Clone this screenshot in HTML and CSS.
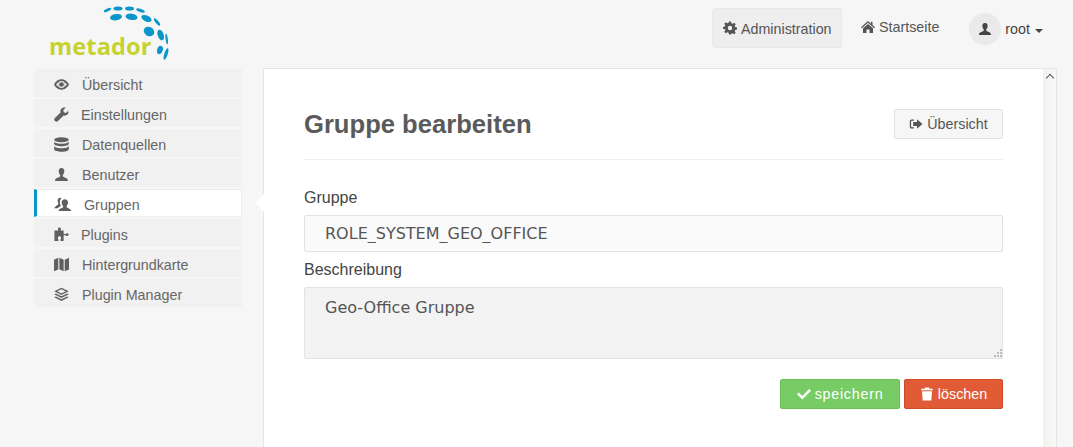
FILE: index.html
```html
<!DOCTYPE html>
<html lang="de">
<head>
<meta charset="utf-8">
<title>Gruppe bearbeiten</title>
<link rel="stylesheet" href="styles.css">
</head>
<body>
<svg class="defs" width="0" height="0" aria-hidden="true">
  <symbol id="i-user" viewBox="0 0 14 14"><path d="M7 1C5.200 1 4.300 2.300 4.400 4c.1 1.500.6 2.800 1.300 3.500.2.400.2.900 0 1.300C4.700 9.800 1.200 10 1 12.500V13h12v-.5c-.2-2.500-3.700-2.700-4.700-3.700-.2-.4-.2-.9 0-1.300.7-.7 1.200-2 1.300-3.500C9.700 2.300 8.800 1 7 1z"/></symbol>
  <symbol id="i-eye" viewBox="0 0 14 14"><path fill-rule="evenodd" d="M7 2.200C3.700 2.200 1.200 4.600 0 7c1.200 2.400 3.700 4.800 7 4.800S12.800 9.400 14 7c-1.200-2.400-3.700-4.800-7-4.800zM7 3.800a3.200 3.200 0 1 1 0 6.400 3.200 3.200 0 0 1 0-6.400zM2 7c.5-.9 1.200-1.700 2-2.200-.6 1.300-.6 3.100 0 4.400C3.200 8.700 2.500 7.900 2 7zm10 0c-.5.900-1.200 1.700-2 2.200.6-1.300.6-3.100 0-4.400.8.500 1.500 1.300 2 2.200z"/><circle cx="7" cy="7" r="2.200"/></symbol>
  <symbol id="i-wrench" viewBox="0 0 14 14"><path d="M13.600 3.300 11.200 5.600 9.200 5 8.600 3l2.300-2.400c-1.500-.5-3.100-.1-4 1-.9.900-1.200 2.300-.8 3.500L.7 10.500c-.6.600-.6 1.600 0 2.300l.5.5c.6.600 1.600.6 2.300 0l5.400-5.400c1.200.4 2.600.1 3.600-.8 1.100-1 1.500-2.700.1-3.800z"/></symbol>
  <symbol id="i-db" viewBox="0 0 14 14"><ellipse cx="7" cy="2.600" rx="6.800" ry="2.400"/><path d="M.2 3.900v2.300c0 1.300 3 2.400 6.800 2.400s6.800-1.100 6.800-2.400V3.900C13.800 5.200 10.800 6.300 7 6.300S.2 5.200.2 3.900z"/><path d="M.2 8.100v3.300c0 1.300 3 2.400 6.800 2.400s6.800-1.100 6.800-2.400V8.100c0 1.300-3 2.400-6.800 2.400S.2 9.400.2 8.100z"/></symbol>
  <symbol id="i-group" viewBox="0 0 16 14"><path d="M6 .6C4.400.6 3.400 1.700 3.400 3.400c0 1.100.3 2 .8 2.700-.1 1.500-2 1.900-3 3L0 10.500h3.800c.8-1.100 2.100-1.600 3-2-.9-1-1.300-2.300-1.300-3.800 0-1.400.5-2.600 1.500-3.400C6.800 .9 6.500.6 6 .6z"/><path d="M10.200 2c-2 0-3.100 1.400-3 3.200.1 1.400.6 2.500 1.300 3.200.2.400.2.800 0 1.200-1 1-3.900 1.100-4.300 3.600h12c-.4-2.500-3.300-2.600-4.300-3.600-.2-.4-.2-.8 0-1.200.7-.7 1.200-1.800 1.300-3.200.1-1.800-1-3.200-3-3.200z"/></symbol>
  <symbol id="i-puzzle" viewBox="0 0 14 14"><path d="M3.700 1.800C3.700.9 4.400.4 5.100.4s1.400.5 1.400 1.400c0 .6-.4.900-.4 1.500H9v3.300h2c.3-.5.7-.8 1.300-.8.800 0 1.400.6 1.400 1.300s-.6 1.300-1.400 1.300c-.6 0-1-.3-1.300-.8H9V13H6.100v-1.600c.3-.3.500-.7.500-1.200 0-.9-.7-1.500-1.500-1.500s-1.500.6-1.500 1.500c0 .5.200.9.500 1.200V13H.4V3.300h3.700c0-.6-.4-.9-.4-1.500z"/></symbol>
  <symbol id="i-map" viewBox="0 0 14 14"><path d="M0 2.500 4 .6v11L0 13.400zM5 .6l4 2v10.800l-4-1.900zM10 2.600 14 .6v11l-4 1.800z"/></symbol>
  <symbol id="i-layers" viewBox="0 0 14 14"><path fill-rule="evenodd" d="M7 .6 13.800 4 7 7.400.2 4zM7 2 3 4l4 2 4-2z"/><path d="M1.800 6 .2 6.800 7 10.200l6.800-3.400L12.200 6 7 8.600z"/><path d="M1.800 8.800.2 9.600 7 13l6.800-3.400-1.600-.8L7 11.400z"/></symbol>
  <symbol id="i-gear" viewBox="0 0 14 14"><path fill-rule="evenodd" d="M6 .5h2l.4 1.800 1.300.5 1.600-1 1.400 1.400-1 1.600.5 1.300 1.800.4v2l-1.800.4-.5 1.300 1 1.600-1.400 1.400-1.600-1-1.300.5L8 13.500H6l-.4-1.800-1.300-.5-1.600 1-1.400-1.400 1-1.600-.5-1.300L0 8V6l1.800-.4.500-1.300-1-1.600 1.400-1.400 1.600 1 1.300-.5zM7 4.800a2.200 2.200 0 1 0 0 4.400 2.200 2.200 0 0 0 0-4.400z"/></symbol>
  <symbol id="i-home" viewBox="0 0 14 14"><path d="M7 1 0 7.200l.8 1L7 2.800l6.200 5.400.8-1L11.500 5V1.800H10v2z"/><path d="M7 4 2 8.300V13h3.500V9.500h3V13H12V8.300z"/></symbol>
  <symbol id="i-logout" viewBox="0 0 14 14"><path d="M5 2.500H2.500C1.400 2.500.8 3.200.8 4.300v5.400c0 1.100.6 1.800 1.700 1.800H5v-1.300H2.800c-.5 0-.7-.2-.7-.7V4.500c0-.5.200-.7.700-.7H5z"/><path d="M8 2.200 13.500 7 8 11.800V9H4.200V5H8z"/></symbol>
  <symbol id="i-check" viewBox="0 0 14 14"><path d="M1.800 5.500 5.300 9l6.900-7L14 3.800 5.300 12.500 0 7.300z"/></symbol>
  <symbol id="i-trash" viewBox="0 0 14 14"><path d="M5 .5h4l.5 1.200h3.300v1.600H1.200V1.700h3.300zM2 4.200h10l-.7 9.300H2.700z"/></symbol>
</svg>

<header class="topbar">
  <a class="logo" href="#">
    <svg class="logo-mark" viewBox="0 0 135 65" width="135" height="65" aria-hidden="true">
      <g fill="#0a96c8">
        <ellipse cx="67.500" cy="10" rx="4" ry="1.500" transform="rotate(-25 67.500 10)"/>
        <ellipse cx="78" cy="8.600" rx="4.500" ry="2"/>
        <ellipse cx="89.500" cy="8.600" rx="4.500" ry="2"/>
        <ellipse cx="100.500" cy="10.500" rx="4.500" ry="1.600" transform="rotate(20 100.500 10.500)"/>
        <ellipse cx="76" cy="17.200" rx="6" ry="3.200" transform="rotate(-8 76 17.200)"/>
        <ellipse cx="91.500" cy="16.800" rx="6" ry="3.200" transform="rotate(8 91.500 16.800)"/>
        <ellipse cx="106.500" cy="18.500" rx="5.500" ry="3" transform="rotate(25 106.500 18.500)"/>
        <ellipse cx="117" cy="22" rx="4.500" ry="1.500" transform="rotate(50 117 22)"/>
        <ellipse cx="109" cy="31.500" rx="5.500" ry="4.500" transform="rotate(30 109 31.500)"/>
        <ellipse cx="120.700" cy="35" rx="3" ry="5.500" transform="rotate(-20 120.700 35)"/>
        <ellipse cx="126.700" cy="39" rx="1.100" ry="5.200" transform="rotate(-8 126.700 39)"/>
        <ellipse cx="120" cy="50" rx="2.800" ry="4.200" transform="rotate(18 120 50)"/>
        <ellipse cx="126" cy="54" rx="1.700" ry="6" transform="rotate(18 126 54)"/>
      </g>
    </svg>
    <span class="logo-text">metador</span>
  </a>
  <nav class="topnav">
    <a class="topnav-admin" href="#"><svg class="ico"><use href="#i-gear"/></svg><span class="nudge">Administration</span></a>
    <a class="topnav-home" href="#"><svg class="ico"><use href="#i-home"/></svg>Startseite</a>
    <a class="topnav-user" href="#">
      <span class="avatar"><svg class="ico"><use href="#i-user"/></svg></span>
      root<span class="caret"></span>
    </a>
  </nav>
</header>

<div class="layout">
  <ul class="sidebar">
    <li class="side-item"><svg class="ico"><use href="#i-eye"/></svg><span class="lbl">Übersicht</span></li>
    <li class="side-item tight"><svg class="ico"><use href="#i-wrench"/></svg><span class="lbl">Einstellungen</span></li>
    <li class="side-item"><svg class="ico"><use href="#i-db"/></svg><span class="lbl">Datenquellen</span></li>
    <li class="side-item"><svg class="ico"><use href="#i-user"/></svg><span class="lbl">Benutzer</span></li>
    <li class="side-item active"><svg class="ico"><use href="#i-group"/></svg><span class="lbl">Gruppen</span></li>
    <li class="side-item tight"><svg class="ico"><use href="#i-puzzle"/></svg><span class="lbl">Plugins</span></li>
    <li class="side-item"><svg class="ico"><use href="#i-map"/></svg><span class="lbl">Hintergrundkarte</span></li>
    <li class="side-item"><svg class="ico"><use href="#i-layers"/></svg><span class="lbl">Plugin Manager</span></li>
  </ul>

  <main class="panel">
    <span class="notch"></span>
    <div class="panel-body">
      <div class="page-head">
        <h1 class="title">Gruppe bearbeiten</h1>
        <a class="btn btn-default" href="#"><svg class="ico"><use href="#i-logout"/></svg>Übersicht</a>
      </div>
      <form class="form">
        <label class="field-label first" for="g">Gruppe</label>
        <input class="field field-input" id="g" type="text" value="ROLE_SYSTEM_GEO_OFFICE">
        <label class="field-label" for="b">Beschreibung</label>
        <div class="area-wrap">
          <textarea class="field field-area" id="b">Geo-Office Gruppe</textarea>
          <svg class="grip" width="9" height="9" viewBox="0 0 9 9" aria-hidden="true">
            <g fill="#bdbdbd">
              <rect x="7" y="0" width="2" height="2"/>
              <rect x="4" y="3" width="2" height="2"/><rect x="7" y="3" width="2" height="2"/>
              <rect x="1" y="6" width="2" height="2"/><rect x="4" y="6" width="2" height="2"/><rect x="7" y="6" width="2" height="2"/>
            </g>
          </svg>
        </div>
        <div class="actions">
          <button class="btn btn-save" type="button"><svg class="ico"><use href="#i-check"/></svg>speichern</button>
          <button class="btn btn-delete" type="button"><svg class="ico"><use href="#i-trash"/></svg>löschen</button>
        </div>
      </form>
    </div>
    <div class="scrolltrack"><span class="scroll-up"></span></div>
  </main>
</div>
</body>
</html>
```
FILE: styles.css
```css
* { box-sizing: border-box; }
html, body { height: 100%; }
body {
  margin: 0;
  background: #f6f6f6;
  color: #555;
  font-family: "Liberation Sans", Arial, sans-serif;
  font-size: 14.3px;
  overflow: hidden;
}
a { color: inherit; text-decoration: none; }
.defs { position: absolute; }
.ico { width: 14px; height: 14px; fill: currentColor; flex: none; }

.topbar {
  height: 68px;
  display: flex;
  justify-content: space-between;
  align-items: flex-start;
}
.logo { position: relative; display: block; width: 135px; height: 65px; margin-left: 40px; }
.logo-mark { display: block; }
.logo-text {
  position: absolute;
  left: 9px;
  top: 29px;
  font-family: "Open Sans", sans-serif;
  font-weight: 700;
  font-size: 23.6px;
  line-height: 34px;
  letter-spacing: .1px;
  color: #c6d22f;
}

.topnav { display: flex; align-items: flex-start; margin-right: 30px; }
.topnav-admin {
  display: flex;
  align-items: center;
  gap: 4px;
  height: 40px;
  width: 130px;
  margin-top: 8px;
  padding-left: 10px;
  background: #eee;
  border: 1px solid #e9e9e9;
  border-radius: 3px;
  color: #555;
}
.nudge { padding-top: 2px; }
.topnav-home {
  display: flex;
  align-items: center;
  gap: 4px;
  height: 40px;
  margin: 8px 30px 0 19px;
  padding-bottom: 2px;
  color: #555;
}
.topnav-user { display: flex; align-items: center; height: 32px; margin-top: 13px; color: #444; }
.avatar {
  width: 32px;
  height: 32px;
  margin-right: 4px;
  border-radius: 50%;
  background: #eaeaea;
  display: flex;
  align-items: center;
  justify-content: center;
  color: #444;
}
.caret {
  margin-left: 5px;
  margin-top: 3px;
  border-top: 4px solid #444;
  border-left: 4px solid transparent;
  border-right: 4px solid transparent;
}

.layout { display: flex; align-items: flex-start; padding-left: 34px; }
.sidebar {
  list-style: none;
  margin: 1px 21px 0 0;
  padding: 0;
  width: 208px;
  display: flex;
  flex-direction: column;
  gap: 2px;
}
.side-item {
  height: 28px;
  display: flex;
  align-items: center;
  padding: 3px 0 0 20px;
  background: #f1f1f1;
  color: #666;
}
.side-item .ico { width: 15px; height: 15px; margin-right: 13px; color: #5f5f5f; }
.side-item.tight .ico { margin-right: 12px; }
.side-item.active {
  background: #fff;
  border-left: 3px solid #0a96c8;
  padding-left: 17px;
  border-top: 1px solid #eee;
  border-bottom: 1px solid #eee;
  border-right: 1px solid #eee;
}
.side-item.active .ico { width: 17px; margin-right: 13px; }

.panel {
  position: relative;
  width: 794px;
  height: 400px;
  display: flex;
  background: #fff;
  border: 1px solid #e4e4e4;
  border-bottom: 0;
}
.notch {
  position: absolute;
  left: -6px;
  top: 127px;
  width: 14px;
  height: 14px;
  background: #fff;
  transform: rotate(45deg);
}
.panel-body { position: relative; flex: 1; padding: 40px 40px 0; }
.scrolltrack {
  width: 13px;
  background: linear-gradient(to right, #f3f1f0, #f8f8f8);
  position: relative;
}
.scroll-up {
  position: absolute;
  left: 4px;
  top: 6px;
  width: 6px;
  height: 6px;
  border-left: 1px solid #555;
  border-top: 1px solid #555;
  transform: rotate(45deg);
}

.page-head {
  display: flex;
  justify-content: space-between;
  align-items: flex-start;
  height: 51px;
  border-bottom: 1px solid #eee;
}
.title { margin: 0; font-size: 25.6px; line-height: 30px; font-weight: 700; color: #5a5a5a; }
.btn {
  display: inline-flex;
  align-items: center;
  justify-content: center;
  height: 30px;
  border-radius: 2px;
  font-family: inherit;
  font-size: 14.3px;
  padding: 0;
}
.btn .ico { margin-right: 4px; width: 14px; height: 14px; }
.btn-default { width: 109px; background: #f6f6f6; border: 1px solid #e2e2e2; color: #555; }
.form { display: flex; flex-direction: column; }
.field-label { font-size: 16px; line-height: 18px; color: #444; margin: 0 0 8px; }
.field-label.first { margin-top: 29px; }
.field {
  display: block;
  width: 100%;
  border: 1px solid #e3e3e3;
  border-radius: 2px;
  font-family: "DejaVu Sans", sans-serif;
  font-size: 16px;
  color: #555;
  outline: none;
  padding: 0 20px;
}
.field-input { height: 37px; background: #fafafa; margin-bottom: 9px; }
.area-wrap { position: relative; height: 72px; }
.field-area { height: 72px; background: #f3f3f3; padding-top: 10px; resize: none; line-height: 20px; }
.grip { position: absolute; right: 1px; bottom: 1px; }
.actions { display: flex; justify-content: flex-end; gap: 4px; margin-top: 20px; }
.btn-save { width: 120px; background: #78cc66; border: 1px solid #69c057; color: #fff; letter-spacing: .75px; }
.btn-delete { width: 99px; background: #e25b37; border: 1px solid #cf4a27; color: #fff; }
```
